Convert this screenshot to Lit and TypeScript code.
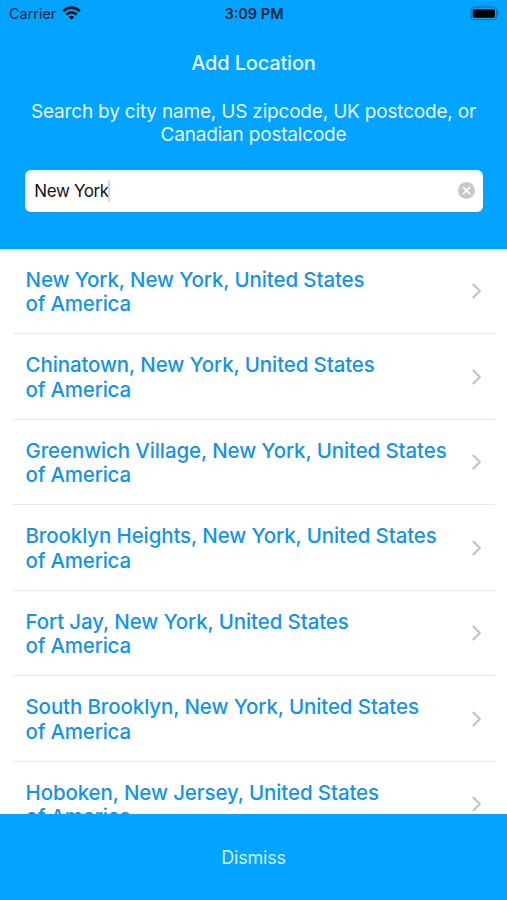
import { LitElement, html, css } from "lit";
import { customElement, property } from "lit/decorators.js";

const LOCATIONS = [
  "New York, New York, United States",
  "Chinatown, New York, United States",
  "Greenwich Village, New York, United States",
  "Brooklyn Heights, New York, United States",
  "Fort Jay, New York, United States",
  "South Brooklyn, New York, United States",
  "Hoboken, New Jersey, United States",
];

@customElement("status-bar")
class StatusBar extends LitElement {
  static styles = css`
    :host {
      display: grid;
      grid-template-columns: 1fr auto 1fr;
      align-items: center;
      height: 26px;
      padding: 0 8px 0 9px;
      box-sizing: border-box;
      color: #04243a;
      font-size: 14.5px;
      white-space: nowrap;
    }
    .carrier { display: flex; align-items: center; gap: 6px; letter-spacing: -0.05px; }
    .time { font-weight: 600; }
    .battery { justify-self: end; }
    svg { display: block; }
  `;
  render() {
    return html`
      <div class="carrier">
        <span>Carrier</span>
        <svg width="19" height="14" viewBox="0 0 19 14" fill="none" stroke="#021420" stroke-width="2.7">
          <path d="M1.2 5.1a11.8 11.8 0 0 1 16.6 0" />
          <path d="M4.3 8.5a7.4 7.4 0 0 1 10.4 0" />
          <path d="M9.5 13.8 6.7 11a4 4 0 0 1 5.6 0z" fill="#021420" stroke="none" />
        </svg>
      </div>
      <div class="time">3:09 PM</div>
      <svg class="battery" width="30" height="15" viewBox="0 0 30 15">
        <rect x="2" y="1" width="25.6" height="12.6" rx="3.6" fill="none" stroke="#0474b5" stroke-width="1.3" />
        <rect x="3.7" y="2.9" width="22.2" height="8.8" rx="1.8" fill="#000" />
        <path d="M28.5 5.2c1.9.8 1.9 3.4 0 4.2z" fill="#0474b5" />
      </svg>
    `;
  }
}

@customElement("location-row")
class LocationRow extends LitElement {
  @property() name = "";
  static styles = css`
    :host {
      display: flex;
      align-items: center;
      justify-content: space-between;
      flex: none;
      height: 85.5px;
      margin: 0 12px 0 13px;
      padding: 1px 12px 0 12.5px;
      box-sizing: border-box;
      border-bottom: 1px solid #e9e9eb;
      color: #1594e4;
      font-size: 20.5px;
      font-weight: 550;
      letter-spacing: -0.12px;
      line-height: 24.5px;
      white-space: nowrap;
    }
    .text { padding-top: 1.5px; }
    .name { display: block; }
    .country { letter-spacing: -0.21px; }
    svg { display: block; }
  `;
  render() {
    return html`
      <div class="text">
        <span class="name">${this.name}</span>
        <span class="name country">of America</span>
      </div>
      <svg width="12" height="18" viewBox="0 0 12 18" fill="none" stroke="#c4c4c7" stroke-width="2.2">
        <path d="M2.4 2.6 8.9 9 2.4 15.4" stroke-linecap="round" stroke-linejoin="round" />
      </svg>
    `;
  }
}

@customElement("app-root")
class AppRoot extends LitElement {
  static styles = css`
    :host {
      display: flex;
      flex-direction: column;
      height: 900px;
      overflow: hidden;
      background: #fff;
      font-family: Inter, "Liberation Sans", sans-serif;
    }
    .header {
      flex: none;
      height: 248.5px;
      background: #02a4ff;
      color: #e6f7ff;
      text-align: center;
      white-space: nowrap;
    }
    .title {
      margin: 25px 0 0;
      font-size: 20px;
      font-weight: 500;
      letter-spacing: -0.17px;
      line-height: 24px;
    }
    .hint {
      margin: 25px 0 0;
      font-size: 19px;
      letter-spacing: -0.19px;
      line-height: 23.3px;
    }
    .line { display: block; }
    .search {
      display: flex;
      align-items: center;
      height: 41.6px;
      margin: 23.5px 24.5px 0 25.3px;
      padding: 0 8px 0 9px;
      box-sizing: border-box;
      border-radius: 6px;
      background: #fff;
      color: #151515;
      font-size: 17px;
      letter-spacing: -0.38px;
    }
    .caret { width: 2px; height: 22px; margin-left: -1px; background: #d6d6fb; }
    .clear { display: block; margin-left: auto; }
    .list {
      flex: 1;
      min-height: 0;
      display: flex;
      flex-direction: column;
      overflow: hidden;
    }
    .dismiss {
      flex: none;
      height: 86px;
      border: 0;
      padding: 1px 0 0;
      background: #02a4ff;
      color: #d2f0ff;
      font: 400 18px/86px Inter, "Liberation Sans", sans-serif;
      letter-spacing: -0.2px;
    }
  `;
  render() {
    return html`
      <div class="header">
        <status-bar></status-bar>
        <h1 class="title">Add Location</h1>
        <p class="hint">
          <span class="line">Search by city name, US zipcode, UK postcode, or</span>
          <span class="line">Canadian postalcode</span>
        </p>
        <div class="search">
          <span>New York</span><span class="caret"></span>
          <svg class="clear" width="17" height="17" viewBox="0 0 17 17">
            <circle cx="8.5" cy="8.5" r="8.5" fill="#c8c8ca" />
            <path d="M5.4 5.4l6.2 6.2M11.6 5.4l-6.2 6.2" stroke="#fff" stroke-width="1.6" stroke-linecap="round" />
          </svg>
        </div>
      </div>
      <div class="list">
        ${LOCATIONS.map((n) => html`<location-row .name=${n}></location-row>`)}
      </div>
      <button class="dismiss">Dismiss</button>
    `;
  }
}
